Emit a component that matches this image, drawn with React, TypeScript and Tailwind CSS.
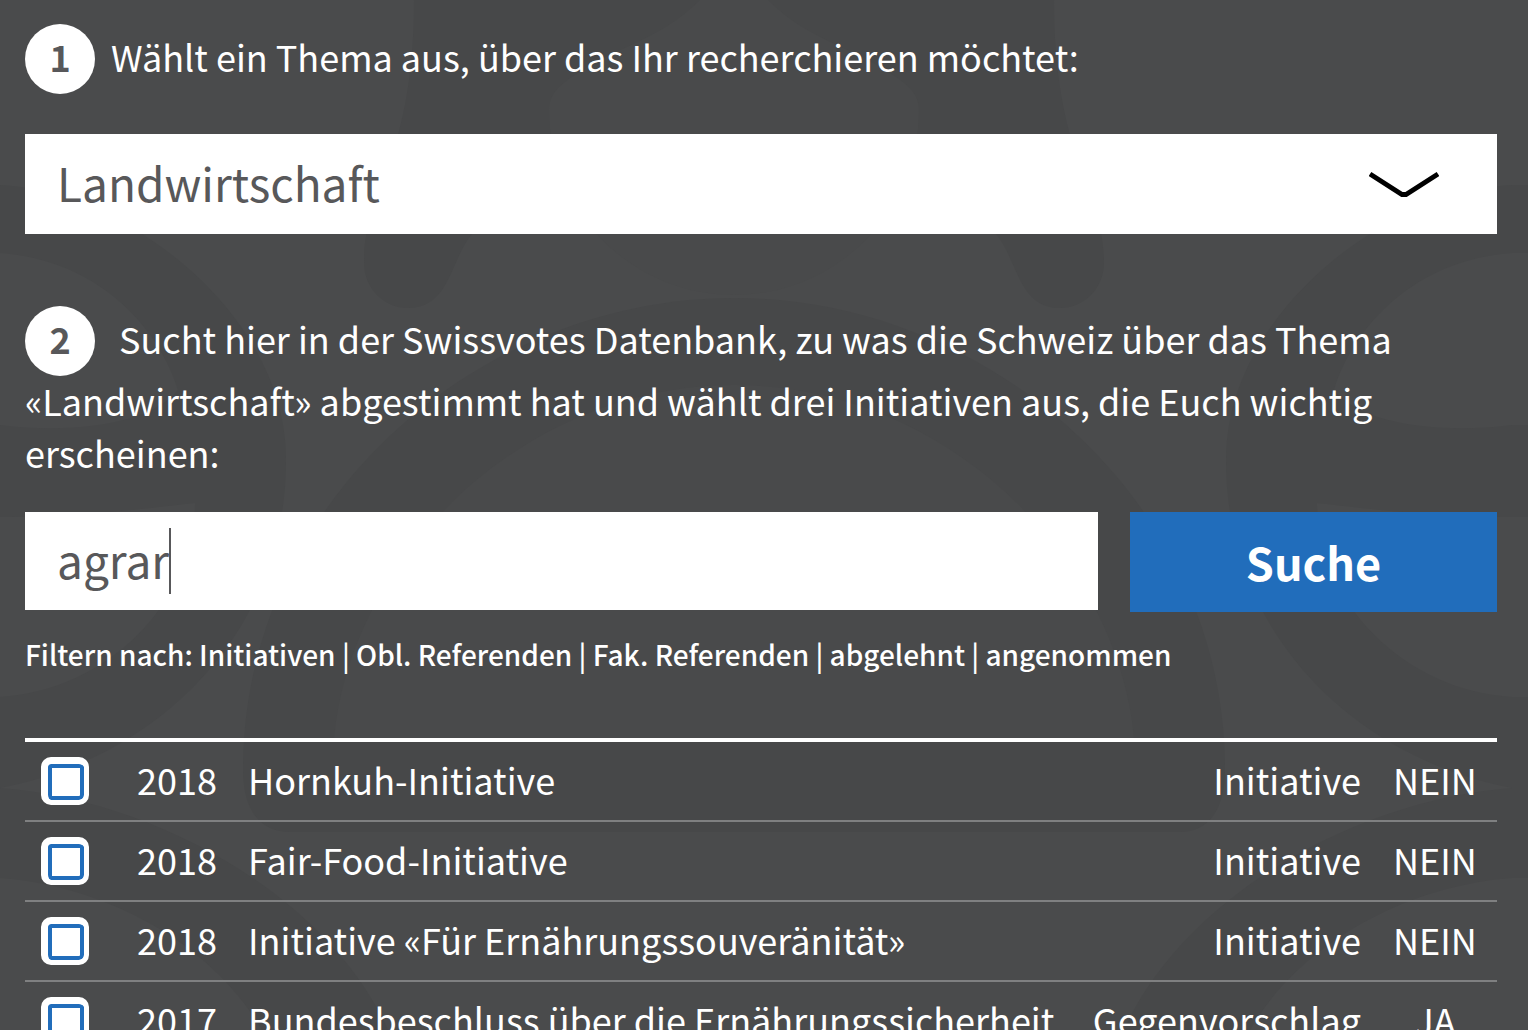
import React, { useState } from "react";

const rows = [
  { year: "2018", title: "Hornkuh-Initiative", kind: "Initiative", result: "NEIN" },
  { year: "2018", title: "Fair-Food-Initiative", kind: "Initiative", result: "NEIN" },
  { year: "2018", title: "Initiative «Für Ernährungssouveränität»", kind: "Initiative", result: "NEIN" },
  { year: "2017", title: "Bundesbeschluss über die Ernährungssicherheit", kind: "Gegenvorschlag", result: "JA" },
];

const filters = ["Initiativen", "Obl. Referenden", "Fak. Referenden", "abgelehnt", "angenommen"];

function SideFigure() {
  return (
    <>
      <path fill="#474849" d="M-20 185H0C120 190 286 310 286 460C286 640 150 760 0 788H-20Z" />
      <path fill="#4a4b4c" d="M-20 253H0C100 260 160 330 178 390C150 425 70 434 0 425H-20Z" />
      <path fill="#4a4b4c" d="M-20 517H0C80 517 150 508 195 503C195 600 110 690 0 697H-20Z" />
      <path fill="#474849" d="M-20 788H0C160 800 330 900 388 1030H262C210 940 100 885 0 878H-20Z" />
    </>
  );
}

function Backdrop() {
  return (
    <svg aria-hidden="true" className="pointer-events-none absolute inset-0 -z-10 size-full" viewBox="0 0 1528 1030" preserveAspectRatio="xMidYMin slice">
      <SideFigure />
      <g transform="translate(1512 0) scale(-1 1)">
        <SideFigure />
      </g>
      <path fill="#474849" d="M414 0C414 160 364 190 364 262C364 290 385 308 408 308C450 308 450 260 472 234C500 200 530 180 548 134C560 220 640 294 734 294C828 294 908 220 920 134C938 180 968 200 996 234C1018 260 1018 308 1060 308C1083 308 1104 290 1104 262C1104 190 1054 160 1054 0Z" />
      <path fill="#494a4b" d="M700 0C670 30 640 40 600 60C565 80 549 90 549 110A185 185 0 0 0 919 110C919 90 903 80 868 60C828 40 798 30 768 0Z" />
      <path fill="#474849" d="M734 298C480 298 243 500 243 770C243 810 260 832 290 832H1180C1208 832 1225 810 1225 770C1225 500 988 298 734 298Z" />
      <path fill="#494a4b" d="M734 385C520 385 350 560 334 738H1134C1118 560 948 385 734 385Z" />
    </svg>
  );
}

export default function App() {
  const [topic, setTopic] = useState("Landwirtschaft");
  const [query, setQuery] = useState("agrar");
  return (
    <main className="relative isolate h-screen overflow-hidden bg-[#4a4b4c] pt-6 pr-[31px] pl-[25px] font-['Noto_Sans_CJK_SC',sans-serif] text-4xl font-normal text-white">
      <Backdrop />
      <label htmlFor="topic" className="flex items-center gap-4">
        <span className="flex size-[70px] shrink-0 items-center justify-center rounded-full bg-white pb-1.5 font-bold text-[#58585a]">1</span>
        <span className="pb-1.5">Wählt ein Thema aus, über das Ihr recherchieren möchtet:</span>
      </label>
      <div className="relative mt-10">
        <select id="topic" value={topic} onChange={(e) => setTopic(e.target.value)} className="block h-[100px] w-full appearance-none rounded-none bg-white px-8 pb-0.5 text-[46px] text-[#58585a] outline-none">
          <option>Landwirtschaft</option>
        </select>
        <svg aria-hidden="true" className="pointer-events-none absolute top-9 right-[58px] h-7 w-[70px]" viewBox="0 0 70 28" fill="none" stroke="#000" strokeWidth="5">
          <path d="M1 4 L33 24.500 H37 L69 4" />
        </svg>
      </div>
      <label htmlFor="query" className="mt-[72px] block leading-[52px]">
        <span className="mr-6 -mb-0.5 inline-flex size-[70px] items-center justify-center rounded-full bg-white pb-1.5 align-baseline font-bold text-[#58585a]">2</span>
        Sucht hier in der Swissvotes Datenbank, zu was die Schweiz über das Thema «Landwirtschaft» abgestimmt hat und wählt drei Initiativen aus, die Euch wichtig erscheinen:
      </label>
      <form className="mt-[34px] flex items-start gap-8" onSubmit={(e) => e.preventDefault()}>
        <div className="flex h-[98px] flex-1 items-center bg-white pl-8 text-[46px] text-[#58585a]">
          <input id="query" type="text" value={query} onChange={(e) => setQuery(e.target.value)} className="h-full [field-sizing:content] pb-1 outline-none" />
          <span aria-hidden="true" className="h-[66px] w-0.5 bg-[#58585a]" />
        </div>
        <button type="submit" className="h-[100px] w-[367px] bg-[#216dbb] text-[45px] font-bold">Suche</button>
      </form>
      <p className="mt-4 text-[28px] leading-[52px] font-medium">
        Filtern nach:{" "}
        {filters.map((f, i) => (
          <React.Fragment key={f}>
            {i > 0 && " | "}
            <a href="#filter">{f}</a>
          </React.Fragment>
        ))}
      </p>
      <table className="mt-[58px] w-full border-separate border-spacing-0 border-t-4 border-white [&_td]:h-20 [&_td]:border-b-2 [&_td]:border-[#7f8081] [&_td]:py-0">
        <tbody>
          {rows.map((r) => (
            <tr key={r.title}>
              <td className="w-28 pl-4">
                <input type="checkbox" aria-label={r.title} className="block size-12 appearance-none rounded-[10px] border-t-[7px] border-r-[5px] border-b-[5px] border-l-[7px] border-white bg-white shadow-[inset_0_0_0_4px_#216dbb] checked:bg-[#216dbb]" />
              </td>
              <td className="w-[111px]"><span className="block pb-1">{r.year}</span></td>
              <td><span className="block pb-1">{r.title}</span></td>
              <td className="text-right"><span className="block pb-1">{r.kind}</span></td>
              <td className="w-[136px] pr-5 pl-8 text-center"><span className="block pb-1">{r.result}</span></td>
            </tr>
          ))}
        </tbody>
      </table>
    </main>
  );
}
